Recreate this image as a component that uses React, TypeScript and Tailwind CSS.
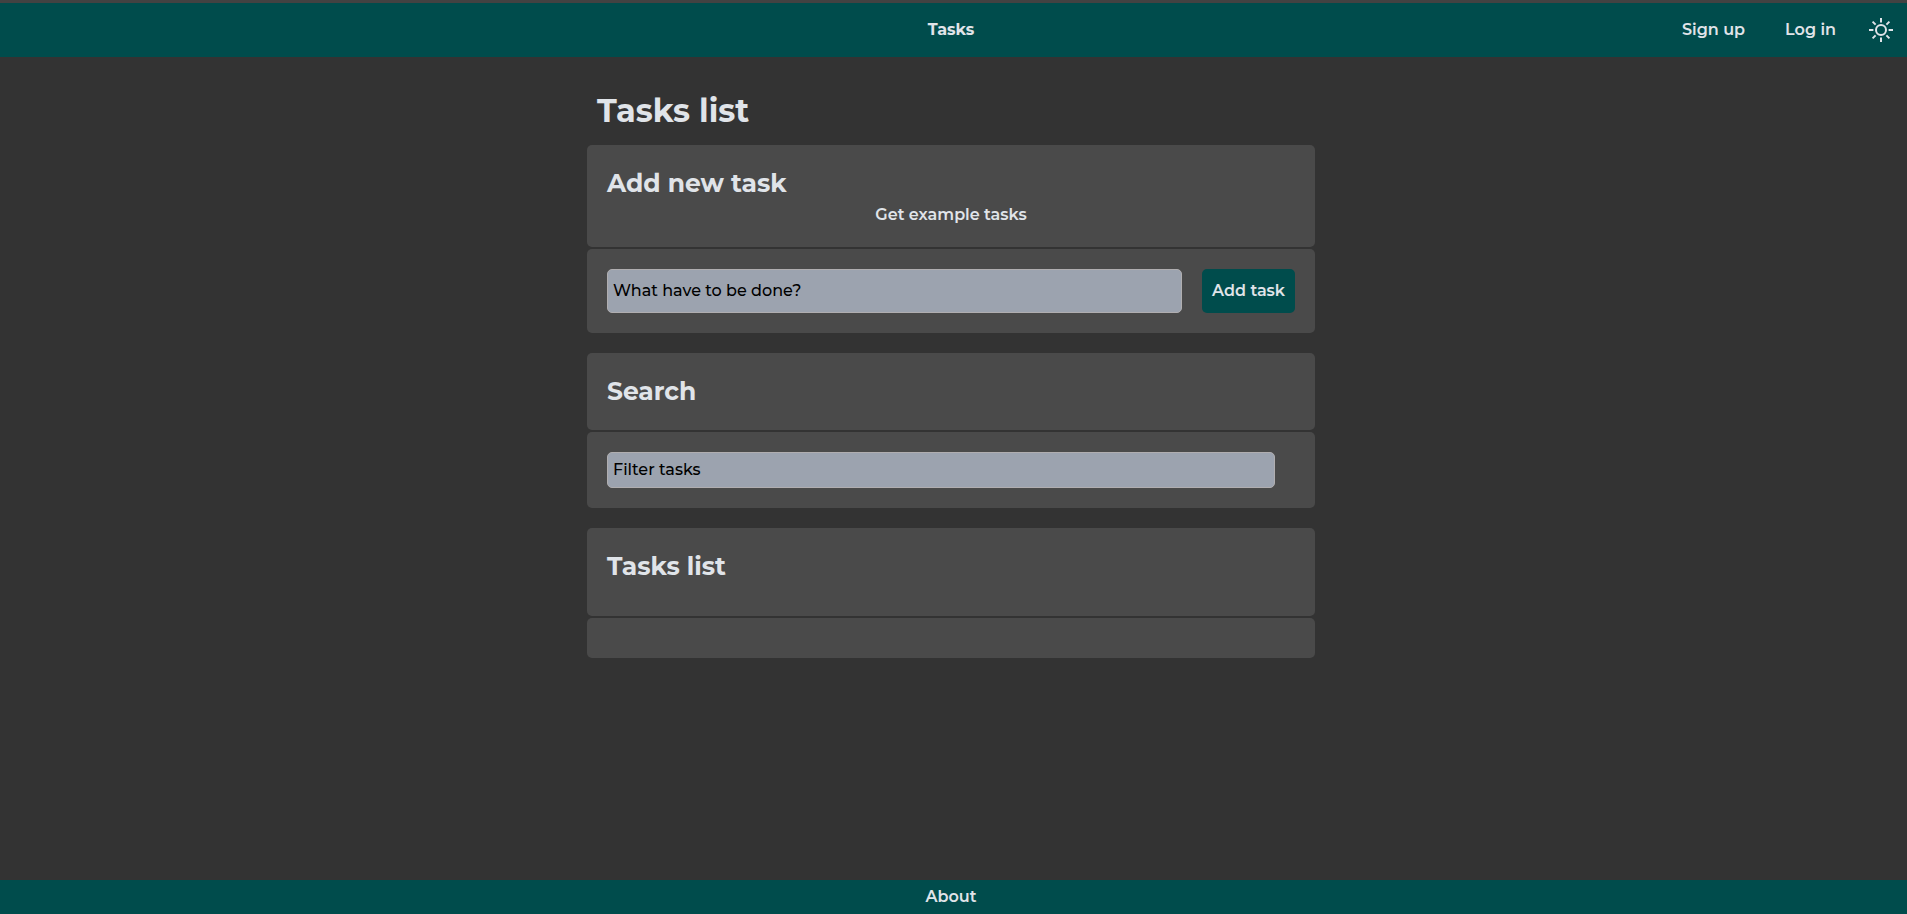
import { useState, type ReactNode } from "react";

const linkStyle = "font-semibold hover:underline";
const fieldStyle =
  "min-w-0 rounded-[5px] border border-[#b0aeb0] bg-[#9ca3af] px-[5px] pb-0.5 text-base font-medium text-black placeholder:text-black";

function SunIcon() {
  return (
    <svg
      className="size-6"
      viewBox="0 0 24 24"
      fill="none"
      stroke="currentColor"
      strokeWidth="2"
      aria-hidden="true"
    >
      <circle cx="12" cy="12" r="5" />
      <path d="M12 0v4.4M12 19.6V24M0 12h4.4M19.6 12H24M3.6 3.6l3 3M17.4 17.4l3 3M3.6 20.4l3-3M17.4 6.6l3-3" />
    </svg>
  );
}

function Section({
  title,
  headerExtra,
  headerStyle = "pb-5",
  children,
}: {
  title: string;
  headerExtra?: ReactNode;
  headerStyle?: string;
  children?: ReactNode;
}) {
  return (
    <section className="mb-5 flex flex-col gap-0.5">
      <header className={"rounded-[5px] bg-[#4a4a4a] px-5 pt-5 " + headerStyle}>
        <h2 className="text-[25px] leading-[37px] font-bold">{title}</h2>
        {headerExtra}
      </header>
      <div className="rounded-[5px] bg-[#4a4a4a] p-5">{children}</div>
    </section>
  );
}

export default function App() {
  const [task, setTask] = useState("");
  const [filter, setFilter] = useState("");

  return (
    <div className="flex min-h-screen flex-col border-t-3 border-[#424242] bg-[#333333] font-['Montserrat','Inter',sans-serif] text-base text-[#e0e4e9]">
      <nav className="grid h-[54px] grid-cols-[1fr_auto_1fr] items-center bg-[#004c4c] pr-3.5 pl-[9px]">
        <a href="#tasks" className="col-start-2 font-bold">
          Tasks
        </a>
        <div className="flex items-center justify-end">
          <a href="#signup" className={"mr-10 " + linkStyle}>
            Sign up
          </a>
          <a href="#login" className={"mr-[33px] " + linkStyle}>
            Log in
          </a>
          <button type="button" aria-label="Toggle theme">
            <SunIcon />
          </button>
        </div>
      </nav>

      <div className="grow pr-[5px]">
        <main className="mx-auto w-full max-w-[728px] pt-[30px]">
          <h1 className="mb-2.5 px-2.5 text-[32px] leading-12 font-bold">Tasks list</h1>

          <Section
            title="Add new task"
            headerExtra={
              <div className="flex h-[25px] items-end justify-center">
                <button type="button" className={linkStyle}>
                  Get example tasks
                </button>
              </div>
            }
          >
            <form className="flex gap-5" onSubmit={(event) => event.preventDefault()}>
              <input
                className={"h-11 grow " + fieldStyle}
                aria-label="New task"
                placeholder="What have to be done?"
                value={task}
                onChange={(event) => setTask(event.target.value)}
              />
              <button type="submit" className="rounded-[5px] bg-[#004c4c] px-2.5 font-semibold">
                Add task
              </button>
            </form>
          </Section>

          <Section title="Search">
            <div className="flex pr-5">
              <input
                className={"h-9 grow " + fieldStyle}
                aria-label="Filter"
                placeholder="Filter tasks"
                value={filter}
                onChange={(event) => setFilter(event.target.value)}
              />
            </div>
          </Section>

          <Section title="Tasks list" headerStyle="pb-[31px]" />
        </main>
      </div>

      <footer className="flex h-[34px] items-center justify-center bg-[#004c4c] pr-[5px]">
        <a href="#about" className={linkStyle}>
          About
        </a>
      </footer>
    </div>
  );
}
